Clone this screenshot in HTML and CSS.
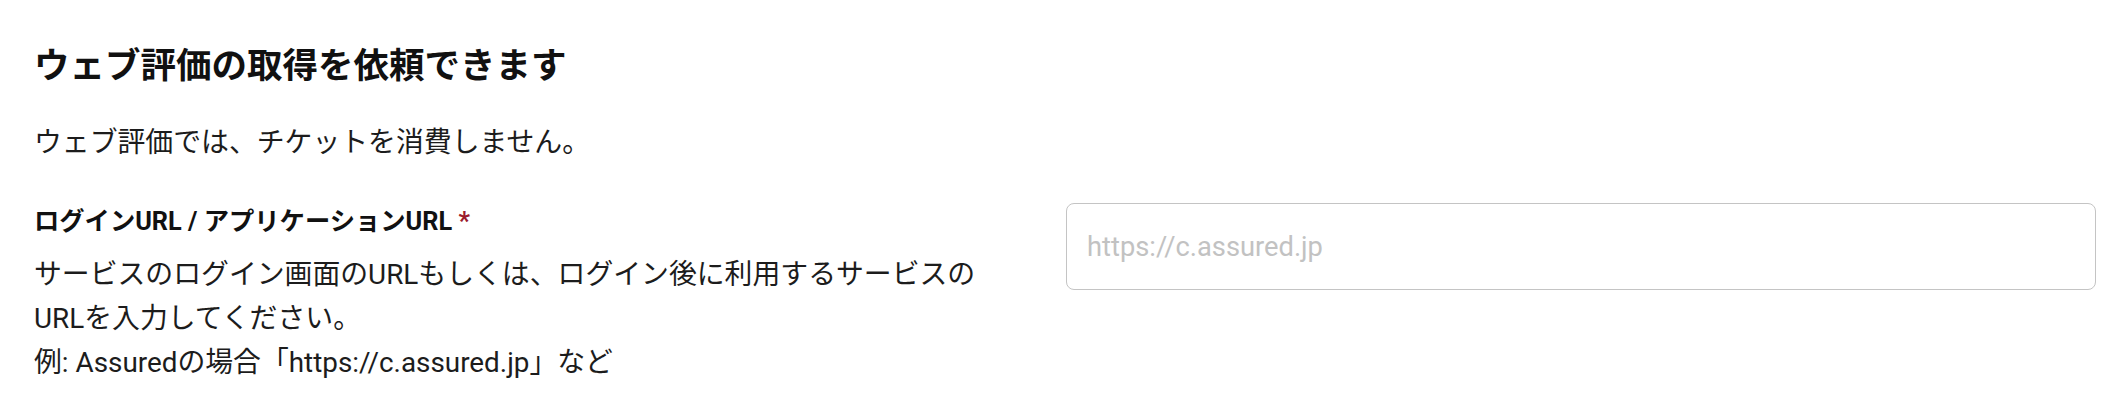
FILE: index.html
```html
<!DOCTYPE html>
<html lang="ja">
<head>
<meta charset="utf-8">
<title>ウェブ評価の取得を依頼できます</title>
<link rel="stylesheet" href="styles.css">
</head>
<body>
<main class="page">
  <h1 class="title">ウェブ評価の取得を依頼できます</h1>
  <p class="lead">ウェブ評価では、チケットを消費しません。</p>
  <div class="field">
    <div class="field-info">
      <label class="field-label" for="url">ログインURL / アプリケーションURL <span class="required">*</span></label>
      <p class="field-help">サービスのログイン画面のURLもしくは、ログイン後に利用するサービスのURLを入力してください。<br>例: Assuredの場合「https://c.assured.jp」など</p>
    </div>
    <input class="field-input" id="url" type="text" placeholder="https://c.assured.jp">
  </div>
</main>
</body>
</html>
```
FILE: styles.css
```css
* { box-sizing: border-box; }
html, body { margin: 0; padding: 0; background: #ffffff; }
body {
  font-family: Roboto, "Noto Sans CJK JP", sans-serif;
  color: #1c1c1c;
}
.page {
  padding: 40px 32px 0 34px;
}
.title {
  margin: 0;
  font-size: 35.5px;
  line-height: 53px;
  font-weight: 700;
  color: #111111;
}
.lead {
  margin: 28px 0 0;
  font-size: 27.85px;
  line-height: 44px;
}
.field {
  display: flex;
  justify-content: space-between;
  align-items: flex-start;
  margin-top: 35px;
}
.field-info {
  width: 975px;
}
.field-label {
  display: block;
  font-size: 25.3px;
  line-height: 44px;
  font-weight: 700;
  color: #111111;
}
.required {
  color: #9b1b2e;
}
.field-help {
  margin: 9px 0 0;
  font-size: 27.85px;
  line-height: 44px;
}
.field-input {
  width: 1030px;
  height: 87px;
  margin-top: 3px;
  padding: 0 20px;
  border: 1.5px solid #c4c4c4;
  border-radius: 8px;
  font-family: Roboto, "Noto Sans CJK JP", sans-serif;
  font-size: 27.3px;
  color: #1c1c1c;
  background: #ffffff;
  outline: none;
}
.field-input::placeholder {
  color: #c2c2c2;
}
```
